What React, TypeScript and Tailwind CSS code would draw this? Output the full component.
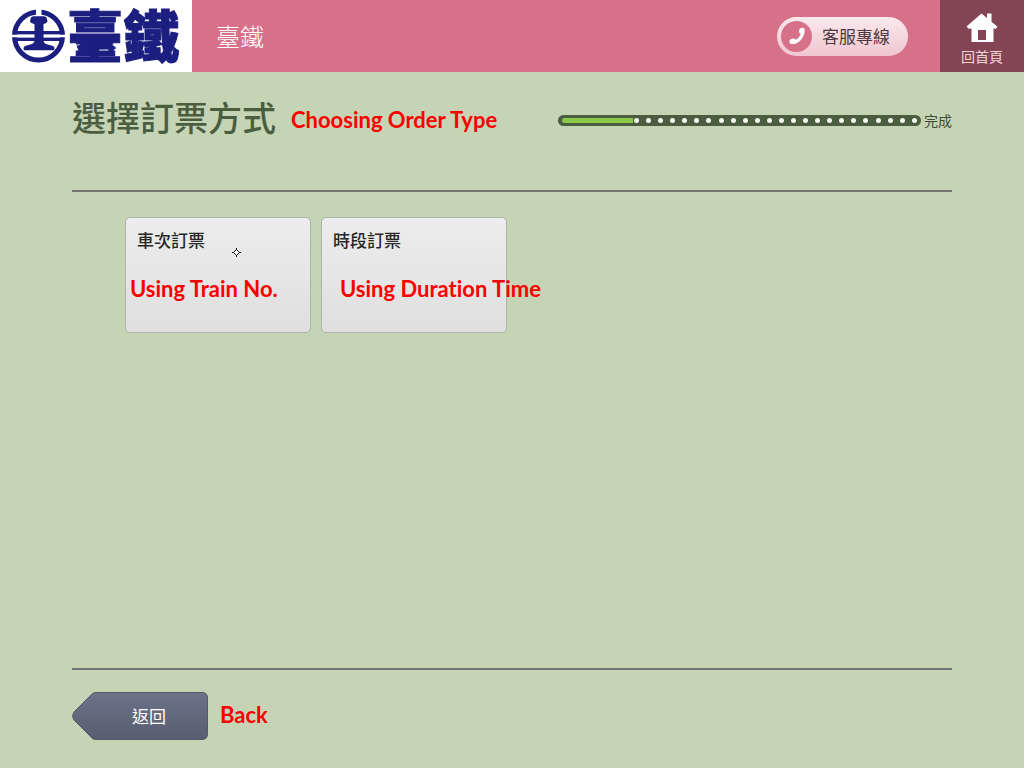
import type { ReactNode } from "react";

const DOTS = Array.from({ length: 24 }, (_, i) => i);

const ORDER_TYPES = [
  { title: "車次訂票", note: "Using Train No.", inset: "pl-1" },
  { title: "時段訂票", note: "Using Duration Time", inset: "pl-[18px]" },
];

function Note({ children }: { children: ReactNode }) {
  return (
    <span className="whitespace-nowrap font-['Lato','Noto_Sans_CJK_TC',sans-serif] text-[22px] leading-[26px] font-bold text-[#fa0000] [font-variant-ligatures:none]">
      {children}
    </span>
  );
}

function RailwayEmblem() {
  return (
    <svg viewBox="0 0 54 54" className="size-[54px] shrink-0" aria-hidden="true">
      <circle cx="27.500" cy="27" r="24" fill="none" stroke="#1c1e80" strokeWidth="5" />
      <path d="M25 0h5.500v7H25z" fill="#fff" />
      <path d="M3 23.700h49M3 30.300h49" stroke="#1c1e80" strokeWidth="3.600" />
      <path d="M0 25.700h54v2.600H0z" fill="#fff" />
      <path
        d="M20 8.500Q20.500 7.500 22.500 7.300h10.500q2 .2 2.500 1.200l1 3.500q0 1.500-1.500 2L32.500 15.300V32q.3 2 2.500 3l7 2q1.500.5 1.500 2.500l-.5 1.800H13L12.500 39.500q0-2 1.500-2.500l7-2q2.200-1 2.500-3V15.300L20.500 14q-1.500-.5-1.500-2z"
        fill="#1c1e80"
      />
    </svg>
  );
}

function Header() {
  return (
    <header className="flex h-[72px] bg-[#d77189]">
      <div className="flex w-48 shrink-0 items-center gap-0.5 bg-white pl-[11px] text-[#1c1e80]">
        <RailwayEmblem />
        <span className="pb-1.5 text-[56px] leading-[66px] font-black whitespace-nowrap [-webkit-text-stroke:1px_#1c1e80]">臺鐵</span>
      </div>
      <div className="flex flex-1 items-center justify-between pr-8 pl-6">
        <span className="text-2xl font-light text-white">臺鐵</span>
        <button
          type="button"
          className="flex h-[39px] w-[131px] items-center gap-[10px] rounded-full bg-linear-to-b from-[#fbe9ed] to-[#efc6d1] pl-1 text-[17px] whitespace-nowrap text-[#4e3941]"
        >
          <span className="flex size-[31px] shrink-0 items-center justify-center rounded-full bg-[#d77189]">
            <svg viewBox="0 0 18 18" className="size-[18px]" aria-hidden="true">
              <path
                d="M11.800 1.800Q13 .8 15 .8q1.500 0 1.700 2.200.2 3.500-1.700 7-2.800 5-8 6.700-3.500 1-5-.5Q1 15 1.500 13.500q.5-1.200 2.500-1.800 2-.5 3 .5 1 .8 3-1 2.200-2 2.700-4.200-1.700-.8-1.700-2.500 0-1.800.8-2.700z"
                fill="#fff"
              />
            </svg>
          </span>
          客服專線
        </button>
      </div>
      <a href="#home" className="flex w-[84px] shrink-0 flex-col items-center bg-[#834453] pt-3 text-sm leading-6 text-[#f3d3da]">
        <svg viewBox="0 0 32 32" className="size-8" aria-hidden="true">
          <path
            d="M.5 14.500L15.500 1.500l5.500 4.600V1.500h4.500v8.300l6 5-2 2.300-2-.8V30h-22V16.300l-2.500.7zM12 18v10h8V18z"
            fill="#fff"
            fillRule="evenodd"
          />
        </svg>
        回首頁
      </a>
    </header>
  );
}

function Progress() {
  return (
    <div className="flex items-center gap-[3px] text-[14px] leading-5 text-[#3f4a37]">
      <div
        role="progressbar"
        aria-label="完成"
        aria-valuemin={0}
        aria-valuemax={30}
        aria-valuenow={6}
        className="flex h-[11px] w-[363px] items-center rounded-full bg-[#4b5d3f] pr-1 pl-1"
      >
        <span className="h-[5px] w-[71px] rounded-l-full bg-[#8cc84b]" />
        <span className="flex flex-1 items-center justify-between pl-px">
          {DOTS.map((dot) => (
            <span key={dot} className="size-[5px] rounded-full bg-[#f4f7f0]" />
          ))}
        </span>
      </div>
      <span>完成</span>
    </div>
  );
}

export default function App() {
  return (
    <div className="flex min-h-screen flex-col bg-[#c6d4b6] font-['Noto_Sans_CJK_TC',sans-serif]">
      <Header />
      <main className="flex flex-1 flex-col px-[72px] pb-7">
        <div className="flex h-[120px] items-start justify-between border-b-2 border-[#70766f] pt-5">
          <div className="flex items-center gap-[15px]">
            <h1 className="text-[34px] leading-[50px] font-medium text-[#4b5d3f]">選擇訂票方式</h1>
            <span className="flex pt-1.5">
              <Note>Choosing Order Type</Note>
            </span>
          </div>
          <div className="flex h-14 items-center">
            <Progress />
          </div>
        </div>

        <div className="relative flex flex-1 items-start gap-[10px] pt-[25px] pl-[53px]">
          {ORDER_TYPES.map((type) => (
            <button
              key={type.title}
              type="button"
              className="flex h-[116px] w-[186px] flex-col items-start rounded-[5px] border border-[#acb5a8] bg-linear-to-b from-[#ededed] to-[#dfdfe0] pt-[10px] text-left"
            >
              <span className="pl-[11px] text-[17px] leading-6 font-medium text-[#272727]">{type.title}</span>
              <span className={`pt-6 ${type.inset}`}>
                <Note>{type.note}</Note>
              </span>
            </button>
          ))}
          <svg viewBox="0 0 9 9" className="absolute top-14 left-40 size-[9px]" aria-hidden="true">
            <path d="M4.500 0v2M4.500 7v2M0 4.500h2M7 4.500h2M4.500 1.500l3 3-3 3-3-3z" fill="#fff" stroke="#111" />
          </svg>
        </div>

        <footer className="flex items-center gap-3 border-t-2 border-[#70766f] pt-[22px]">
          <button type="button" className="relative h-12 w-[136px] text-[17px] text-white">
            <svg viewBox="0 0 136 48" className="absolute inset-0 size-full" aria-hidden="true">
              <defs>
                <linearGradient id="back-fill" x1="0" y1="0" x2="0" y2="1">
                  <stop offset="0" stopColor="#6c7389" />
                  <stop offset="1" stopColor="#575e71" />
                </linearGradient>
              </defs>
              <path
                d="M24 .5h106q5.500 0 5.500 5.500v36q0 5.500-5.500 5.500H24q-2.500 0-4-1.500L2 28q-3-4 0-8L20 2q1.500-1.500 4-1.500z"
                fill="url(#back-fill)"
                stroke="#535a6a"
              />
            </svg>
            <span className="relative pl-[18px]">返回</span>
          </button>
          <span className="flex pb-0.5">
            <Note>Back</Note>
          </span>
        </footer>
      </main>
    </div>
  );
}
